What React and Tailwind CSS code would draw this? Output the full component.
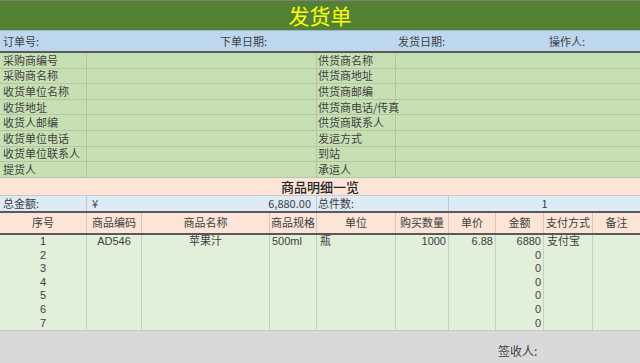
const left = ['采购商编号', '采购商名称', '收货单位名称', '收货地址', '收货人邮编', '收货单位电话', '收货单位联系人', '提货人']
const right = ['供货商名称', '供货商地址', '供货商邮编', '供货商电话/传真', '供货商联系人', '发运方式', '到站', '承运人']

const cols = 'grid grid-cols-[87px_55px_128px_47px_79px_53px_47px_48px_49px_47px]'
const heads = ['序号', '商品编码', '商品名称', '商品规格', '单位', '购买数量', '单价', '金额', '支付方式', '备注']

const rows = [
  { n: 1, code: 'AD546', name: '苹果汁', spec: '500ml', unit: '瓶', qty: '1000', price: '6.88', amt: '6880', pay: '支付宝' },
  { n: 2, amt: '0' }, { n: 3, amt: '0' }, { n: 4, amt: '0' },
  { n: 5, amt: '0' }, { n: 6, amt: '0' }, { n: 7, amt: '0' },
]

const cell = 'flex items-center border-r border-[#c3d2b9] whitespace-nowrap'

export default function App() {
  return (
    <div className="w-[640px] h-[363px] overflow-hidden bg-white text-[11px] leading-none text-[#404040]" style={{ fontFamily: '"Noto Sans CJK SC", "Noto Sans", sans-serif' }}>
      {/* title */}
      <div className="h-[30px] bg-[#548235] border-t border-[#7f7f7f] flex items-center justify-center">
        <span className="text-[21px] leading-none text-[#ffff00]">发货单</span>
      </div>

      {/* order info */}
      <div className="h-[23px] bg-[#bdd7ee] border-t border-[#9fb5c9] border-b-2 border-b-[#595959] grid grid-cols-[220px_178px_151px_91px] items-center">
        <span className="pl-[3px]">订单号:</span>
        <span>下单日期:</span>
        <span>发货日期:</span>
        <span>操作人:</span>
      </div>

      {/* parties */}
      <div className="bg-[#c6e0b4]">
        {left.map((l, i) => (
          <div key={l} className="grid grid-cols-[87px_230px_79px_244px] h-[15.6px] border-b border-[#b2c6a6]">
            <span className="flex items-center pl-[3px] border-r border-[#b2c6a6] whitespace-nowrap">{l}</span>
            <span className="border-r border-[#b2c6a6]"></span>
            <span className="flex items-center pl-[1px] border-r border-[#b2c6a6] whitespace-nowrap">{right[i]}</span>
            <span></span>
          </div>
        ))}
      </div>

      {/* section title */}
      <div className="h-[17px] bg-[#fce4d6] flex items-center justify-center text-[13px] leading-none text-[#262626] font-medium">
        商品明细一览
      </div>

      {/* totals */}
      <div className="h-[18px] bg-[#ddebf7] border-t border-[#c9c9c9] border-b-2 border-b-[#595959] grid grid-cols-[87px_230px_79px_53px_191px] items-center">
        <span className="pl-[3px] border-r border-[#b9c9d8] h-full flex items-center">总金额:</span>
        <span className="flex justify-between px-[5px] border-r border-[#b9c9d8] h-full items-center">
          <span>¥</span>
          <span>6,880.00</span>
        </span>
        <span className="pl-[1px] h-full flex items-center">总件数:</span>
        <span className="border-r border-[#b9c9d8] h-full"></span>
        <span className="text-center">1</span>
      </div>

      {/* table head */}
      <div className={`${cols} h-[22px] bg-[#fce4d6] border-b-2 border-[#595959] items-stretch`}>
        {heads.map(h => (
          <span key={h} className="flex items-center justify-center border-r border-[#e0c4b4] last:border-r-0 whitespace-nowrap">{h}</span>
        ))}
      </div>

      {/* table body: latin font first so the digit rows fit 13.6px */}
      <div className="bg-[#e2efda]" style={{ fontFamily: '"Liberation Sans", "Noto Sans CJK SC", sans-serif' }}>
        {rows.map(r => (
          <div key={r.n} className={`${cols} h-[13.6px]`}>
            <span className={`${cell} justify-center`}>{r.n}</span>
            <span className={`${cell} justify-center`}>{r.code}</span>
            <span className={`${cell} justify-center`}>{r.name}</span>
            <span className={`${cell} pl-[2px]`}>{r.spec}</span>
            <span className={`${cell} pl-[3px]`}>{r.unit}</span>
            <span className={`${cell} justify-end pr-[2px]`}>{r.qty}</span>
            <span className={`${cell} justify-end pr-[2px]`}>{r.price}</span>
            <span className={`${cell} justify-end pr-[2px]`}>{r.amt}</span>
            <span className={`${cell} pl-[3px]`}>{r.pay}</span>
            <span></span>
          </div>
        ))}
      </div>

      {/* footer */}
      <div className="h-[35px] bg-[#d9d9d9] border-t border-[#c8c8c8] pt-[14px] pl-[498px] text-[12px] leading-none">
        签收人:
      </div>
    </div>
  )
}
